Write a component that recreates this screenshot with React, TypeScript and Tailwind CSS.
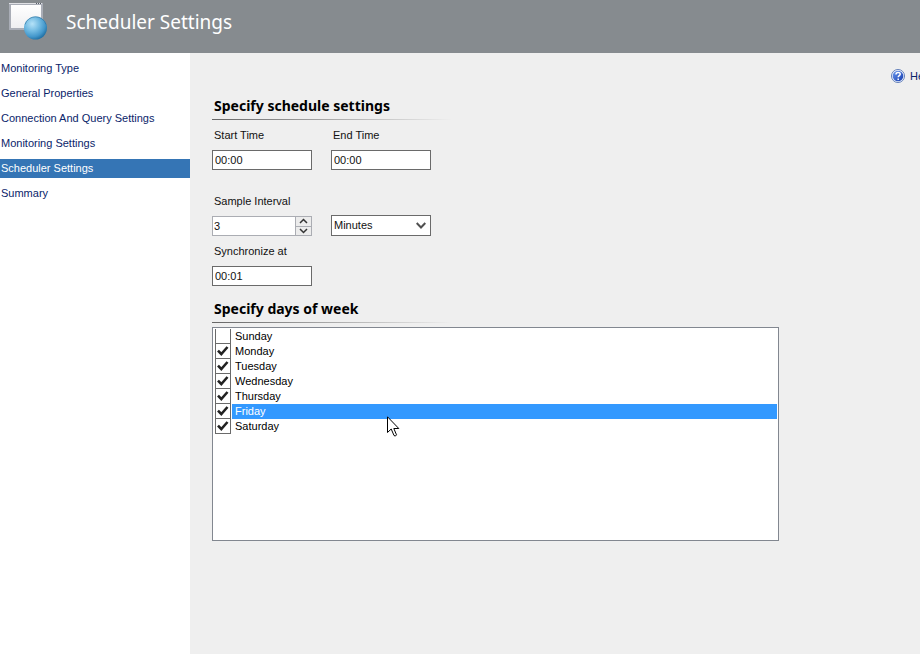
import { useState } from "react";

const steps = [
  "Monitoring Type",
  "General Properties",
  "Connection And Query Settings",
  "Monitoring Settings",
  "Scheduler Settings",
  "Summary",
];

const weekDays = ["Sunday", "Monday", "Tuesday", "Wednesday", "Thursday", "Friday", "Saturday"];

function WindowGlobeIcon() {
  return (
    <svg width="40" height="40" viewBox="0 0 40 40" aria-hidden="true">
      <defs>
        <linearGradient id="pane" x1="0" y1="0" x2="0" y2="1">
          <stop offset="0" stopColor="#ffffff" />
          <stop offset="1" stopColor="#efeff1" />
        </linearGradient>
        <radialGradient id="globe" cx="0.36" cy="0.32" r="0.7">
          <stop offset="0" stopColor="#b5e2f8" />
          <stop offset="0.45" stopColor="#73bbe2" />
          <stop offset="0.8" stopColor="#4397cb" />
          <stop offset="1" stopColor="#2474a8" />
        </radialGradient>
      </defs>
      <rect x="0" y="3" width="34" height="27" fill="#a9adb6" />
      <rect x="0" y="3" width="33" height="1" fill="#e0e1e5" />
      <path d="M27 3h1v1h-1zM29 3h1v1h-1zM31 3h1v1h-1z" fill="#555b66" />
      <rect x="2" y="5" width="30" height="23" fill="url(#pane)" />
      <circle cx="26.500" cy="28" r="11.500" fill="url(#globe)" />
      <path d="M16 24.500a11 11 0 0 1 21 0" fill="none" stroke="#2d719c" strokeWidth="1" opacity="0.6" />
    </svg>
  );
}

function HelpIcon() {
  return (
    <svg width="14" height="14" viewBox="0 0 14 14" className="shrink-0" aria-hidden="true">
      <defs>
        <linearGradient id="help" x1="0" y1="0" x2="1" y2="1">
          <stop offset="0" stopColor="#6e9cf0" />
          <stop offset="1" stopColor="#1239ad" />
        </linearGradient>
      </defs>
      <circle cx="7" cy="7" r="6.500" fill="#f4f7ff" stroke="#5f7db8" />
      <circle cx="7" cy="7" r="5.300" fill="url(#help)" />
      <path d="M5 5.500C5 2.900 9.300 3 9.200 5.200C9.200 6.600 7.200 6.700 7.200 8.300M7.200 9.500V11" fill="none" stroke="#fff" strokeWidth="1.500" />
    </svg>
  );
}

function Heading({ children }: { children: string }) {
  return (
    <div className="w-60">
      <h2 className="h-[23px] whitespace-nowrap pl-0.5 font-['Noto_Sans',sans-serif] text-[14px] leading-5 font-bold text-black">
        {children}
      </h2>
      <div className="h-px bg-linear-to-r from-[#666] via-[#aaa] to-[#efefef]" />
    </div>
  );
}

function TimeField({ id, label, value }: { id: string; label: string; value: string }) {
  return (
    <div className="w-[100px]">
      <label htmlFor={id} className="block pl-0.5 leading-5">
        {label}
      </label>
      <input
        id={id}
        type="text"
        defaultValue={value}
        className="mt-[5px] block h-5 w-full border border-[#6a6a6a] bg-white pl-0.5 outline-none"
      />
    </div>
  );
}

export default function App() {
  const [checked, setChecked] = useState(weekDays.map((d) => d !== "Sunday"));
  const [amount, setAmount] = useState(3);

  return (
    <div className="relative flex min-h-screen flex-col overflow-hidden bg-[#efefef] font-['Liberation_Sans',Arial,sans-serif] text-[11px] text-[#111]">
      <header className="flex h-[53px] items-start bg-[#868b8f] pl-[9px]">
        <WindowGlobeIcon />
        <h1 className="pt-1 pl-[17px] font-['Noto_Sans',sans-serif] text-[19px] leading-9 text-white">Scheduler Settings</h1>
      </header>

      <div className="flex flex-1">
        <nav className="w-[190px] shrink-0 bg-white pt-1.5">
          <ul className="flex flex-col gap-1.5">
            {steps.map((step) => (
              <li key={step}>
                <a
                  href="#"
                  className={
                    step === "Scheduler Settings"
                      ? "block h-[19px] bg-[#3575b5] pl-px leading-[19px] text-white"
                      : "block h-[19px] pl-px leading-[19px] text-[#0a246a]"
                  }
                >
                  {step}
                </a>
              </li>
            ))}
          </ul>
        </nav>

        <main className="min-w-0 flex-1 pt-[13px] pl-[22px]">
          <div className="flex justify-end">
            <button type="button" className="flex h-5 w-[29px] items-center gap-[5px] overflow-hidden text-[#0a246a]">
              <HelpIcon />
              Help
            </button>
          </div>

          <section className="mt-2.5">
            <Heading>Specify schedule settings</Heading>
            <div className="mt-[5px] flex gap-[19px]">
              <TimeField id="start" label="Start Time" value="00:00" />
              <TimeField id="end" label="End Time" value="00:00" />
            </div>

            <label htmlFor="interval" className="mt-[21px] block pl-0.5 leading-5">
              Sample Interval
            </label>
            <div className="mt-1 flex items-end gap-[19px]">
              <div className="flex h-5 w-[100px] border border-[#abadb3] bg-white">
                <input
                  id="interval"
                  type="text"
                  value={amount}
                  onChange={(e) => setAmount(Number(e.target.value) || 0)}
                  className="min-w-0 flex-1 pl-px outline-none"
                />
                <div className="flex w-4 flex-col gap-px bg-[#abadb3] pl-px">
                  <button
                    type="button"
                    aria-label="Increase"
                    onClick={() => setAmount(amount + 1)}
                    className="flex flex-1 items-center justify-center bg-[#ececec]"
                  >
                    <svg width="9" height="6" viewBox="0 0 9 6" fill="none" stroke="#333" strokeWidth="1.500">
                      <path d="M1 5l3.500-3.500L8 5" />
                    </svg>
                  </button>
                  <button
                    type="button"
                    aria-label="Decrease"
                    onClick={() => setAmount(amount - 1)}
                    className="flex flex-1 items-center justify-center bg-[#ececec]"
                  >
                    <svg width="9" height="6" viewBox="0 0 9 6" fill="none" stroke="#333" strokeWidth="1.500">
                      <path d="M1 1l3.500 3.500L8 1" />
                    </svg>
                  </button>
                </div>
              </div>
              <div className="relative w-[100px]">
                <select
                  aria-label="Interval unit"
                  className="block h-[21px] w-full appearance-none border border-[#6a6a6a] bg-white pl-0.5 outline-none"
                >
                  <option>Minutes</option>
                  <option>Hours</option>
                </select>
                <svg
                  className="pointer-events-none absolute top-[7px] right-[5px]"
                  width="10"
                  height="8"
                  viewBox="0 0 10 8"
                  fill="none"
                  stroke="#505050"
                  strokeWidth="2"
                >
                  <path d="M0.700 1L5 5.500L9.300 1" />
                </svg>
              </div>
            </div>

            <div className="mt-[5px]">
              <TimeField id="sync" label="Synchronize at" value="00:01" />
            </div>
          </section>

          <section className="mt-[13px]">
            <Heading>Specify days of week</Heading>
            <ul className="mt-1 mr-[141px] min-h-[214px] border border-[#828790] bg-white py-px pr-px pl-0.5">
              {weekDays.map((day, i) => (
                <li key={day}>
                  <label className="flex h-[15px] gap-px">
                    <span className="relative block w-4">
                      <input
                        type="checkbox"
                        checked={checked[i]}
                        onChange={() => setChecked(checked.map((c, n) => (n === i ? !c : c)))}
                        className="block h-[15px] w-4 appearance-none border-x border-b border-[#6a6a6a] bg-white"
                      />
                      {checked[i] && (
                        <svg
                          className="pointer-events-none absolute top-px left-0.5"
                          width="12"
                          height="11"
                          viewBox="0 0 12 11"
                          fill="none"
                          stroke="#222"
                          strokeWidth="2.600"
                        >
                          <path d="M1 5.600L4.300 9L10.500 2" />
                        </svg>
                      )}
                    </span>
                    <span
                      className={
                        day === "Friday"
                          ? "flex-1 bg-[#3399ff] pl-[3px] leading-[15px] text-white"
                          : "flex-1 pl-[3px] leading-[15px] text-black"
                      }
                    >
                      {day}
                    </span>
                  </label>
                </li>
              ))}
            </ul>
          </section>
        </main>
      </div>

      <svg
        className="pointer-events-none absolute top-[416px] left-[387px]"
        width="13"
        height="22"
        viewBox="0 0 13 22"
        aria-hidden="true"
      >
        <path
          d="M0.500 0.800V16.500L4.200 13L7 19.500Q8.500 21 9.500 18.800L6.800 12.500H11.800Z"
          fill="#fff"
          stroke="#000"
        />
      </svg>
    </div>
  );
}
